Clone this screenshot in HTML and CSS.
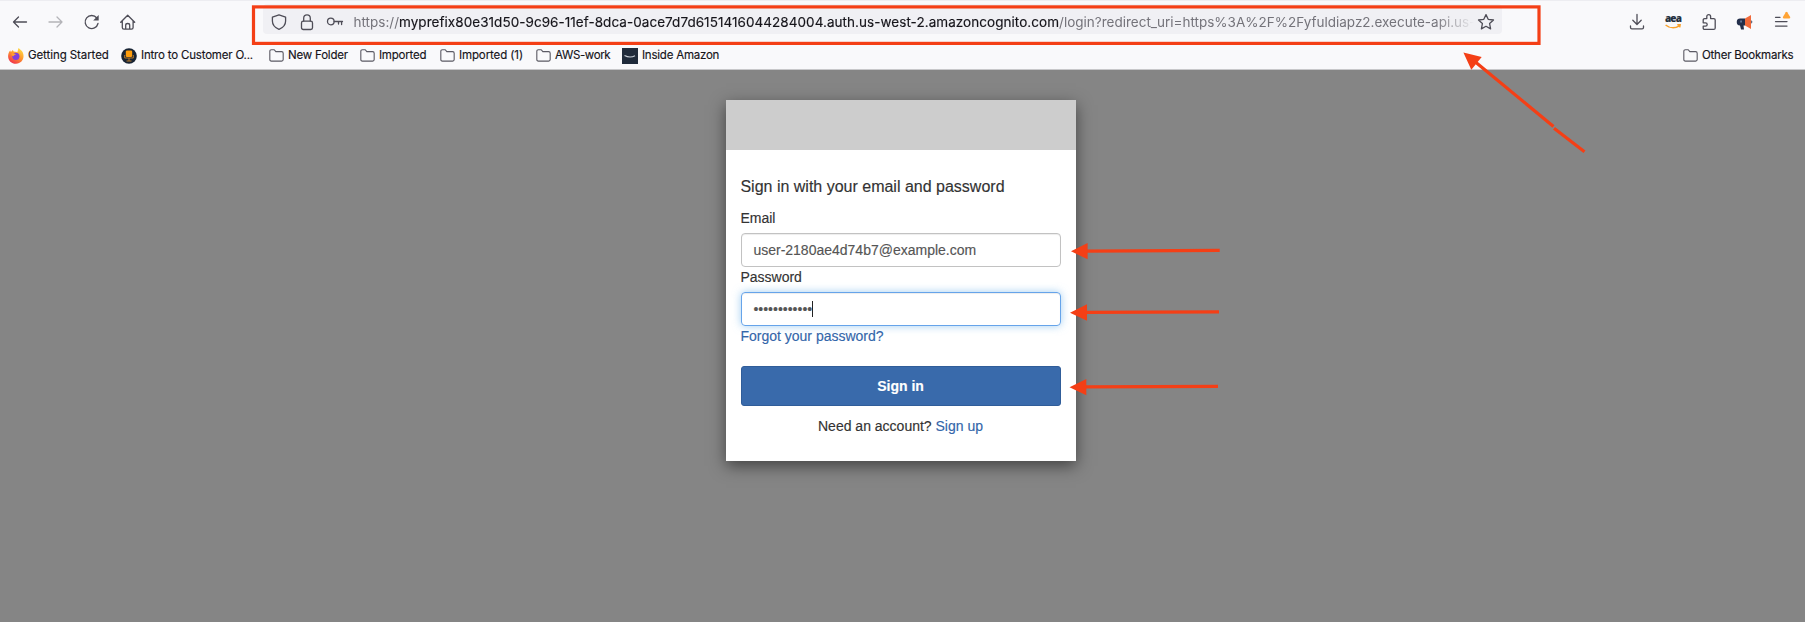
FILE: index.html
```
<!DOCTYPE html>
<html lang="en">
<head>
<meta charset="utf-8">
<title>Sign in</title>
<link rel="stylesheet" href="styles.css">
</head>
<body>
<header class="chrome">
  <div class="navbar">
    <div class="nav-buttons">
      <svg class="icon" viewBox="0 0 16 16"><path d="M14.500 8H1.500M6.500 3 1.500 8l5 5"/></svg>
      <svg class="icon disabled" viewBox="0 0 16 16"><path d="M1 8h13M9 3l5 5-5 5"/></svg>
      <svg class="icon" viewBox="0 0 16 16"><path d="M12.800 4A6.500 6.500 0 1 0 14 9.500"/><path class="solid" d="M14.700 1v5.500H9.200z"/></svg>
      <svg class="icon" viewBox="0 0 16 16"><path d="M.7 8.300 7.700 1.300l7 7M2.300 7v6.600q0 1.600 1.600 1.600h7.600q1.600 0 1.600-1.600V7M5.700 15v-3.800q0-1.700 2-1.700t2 1.700V15"/></svg>
    </div>
    <div class="urlbar">
      <div class="url-icons">
        <svg class="icon" viewBox="0 0 16 16"><path d="M8 .8 14.600 3.200V7c0 4-2.600 6.700-6.600 8.400C4 13.700 1.400 11 1.400 7V3.200z"/></svg>
        <svg class="icon" viewBox="0 0 16 16"><rect x="2.500" y="7.200" width="11" height="8.300" rx="1.800"/><path d="M4.700 7V4.200a3.300 3.300 0 0 1 6.600 0V7"/></svg>
        <svg class="icon" viewBox="0 0 16 16"><circle cx="3.800" cy="7.500" r="3.300"/><path d="M7.200 7.500h8.300M14.600 7.500v3M11.500 7.500v2.500"/></svg>
      </div>
      <div class="url"><span class="scheme">https://</span><span class="host">myprefix80e31d50-9c96-11ef-8dca-0ace7d7d6151416044284004.auth.us-west-2.amazoncognito.com</span><span class="path">/login?redirect_uri=https%3A%2F%2Fyfuldiapz2.execute-api.us-</span></div>
      <svg class="icon star" viewBox="0 0 16 16"><path d="m8 .6 2.200 4.700 5.300.7-3.900 3.600 1 5.300L8 12.300l-4.600 2.600 1-5.300L.5 6l5.300-.7z"/></svg>
    </div>
    <div class="tools">
      <svg class="icon" viewBox="0 0 16 16"><path d="M8 .5v9.800M3.800 6.300 8 10.500l4.200-4.200M1.500 12v1.500q0 1.400 1.400 1.400h10.200q1.400 0 1.400-1.400V12"/></svg>
      <div class="aea"><span class="aea-text">aea</span><svg class="smile" viewBox="0 0 16 5"><path d="M.6 1c4 3.300 9.500 3.400 13.800.8M12.300.8l2.800-.1-.4 2.600"/></svg></div>
      <svg class="icon" viewBox="0 0 16 16"><path d="M2.200 8.800V6.100q0-1.500 1.500-1.500h2.100V2.500a1.900 1.900 0 0 1 3.800 0v2.100h3.100q1.500 0 1.500 1.500v7.800q0 1.500-1.500 1.500H3.700q-1.500 0-1.500-1.500v-1.700h2.300a1.700 1.700 0 0 0 0-3.400z"/></svg>
      <svg class="icon horn" viewBox="0 0 16 16"><path class="navy" d="M8 4.500H3.500a3.500 3.500 0 0 0-.5 7l1 4h3l-.5-4H8z"/><path class="orange" d="M8 4.500 14 1v14l-6-3.500z"/><path class="navy" d="M14.300 6.300q2 1.700 0 3.400z"/><path class="eye" d="M3.300 6.500h1.500v2H3.300z"/></svg>
      <svg class="icon menu" viewBox="0 0 16 16"><path d="M2.500 3.300H7M2.500 7.600h11.500M2.500 12.100h11.500"/><path class="alert" d="M12.800-1.700q.7-.9 1.400 0l3 4.800q.4 1.400-.9 1.400h-5.500q-1.300 0-.9-1.400z"/></svg>
    </div>
  </div>
  <nav class="bookmarks">
    <div class="bookmark b1"><svg class="fav" viewBox="0 0 16 16"><defs><linearGradient id="ff" x1=".8" y1="0" x2=".2" y2="1"><stop offset="0" stop-color="#ffe04a"/><stop offset=".45" stop-color="#ff9a2c"/><stop offset="1" stop-color="#f0264f"/></linearGradient></defs><path fill="url(#ff)" d="M10.500 0c1 1 3.500 2.500 4.300 4.500 2.300 5.500-1 11.300-6.800 11.300-5 0-8.500-3.800-7.800-8.800C.6 4.600 1.600 3 2.300 2.500l.6 1.600L4.800 2l.9 1.600 3.700.5z"/><circle cx="7.900" cy="8.300" r="3.600" fill="#8040dc"/><path fill="#ffa12e" d="M3.500 5.400c2-.6 3.700.2 4.600 1.300-1.700 0-2.500.7-2.500 1.600-1.400-.2-2.400-1.200-2.100-2.900z"/></svg><span>Getting Started</span></div>
    <div class="bookmark b2"><svg class="fav" viewBox="0 0 16 16"><circle cx="8" cy="8" r="7.800" fill="#182434"/><rect x="4.800" y="2.500" width="6.400" height="6.500" rx="1.200" fill="#ff9d0a"/><path d="M3.700 7v3h8.600V7M8 10v3M5.500 13h5" fill="none" stroke="#b97a28"/></svg><span>Intro to Customer O...</span></div>
    <div class="bookmark b3"><svg class="folder" viewBox="0 0 16 14"><path d="M.8 11.300V2.500Q.8.800 2.500.800h3l1.800 2h6.200q1.700 0 1.700 1.700v6.800q0 1.700-1.700 1.700h-11Q.8 13 .8 11.300z"/></svg><span>New Folder</span></div>
    <div class="bookmark b4"><svg class="folder" viewBox="0 0 16 14"><path d="M.8 11.300V2.500Q.8.800 2.500.800h3l1.800 2h6.200q1.700 0 1.700 1.700v6.800q0 1.700-1.700 1.700h-11Q.8 13 .8 11.300z"/></svg><span>Imported</span></div>
    <div class="bookmark b5"><svg class="folder" viewBox="0 0 16 14"><path d="M.8 11.300V2.500Q.8.800 2.500.800h3l1.800 2h6.200q1.700 0 1.700 1.700v6.800q0 1.700-1.700 1.700h-11Q.8 13 .8 11.300z"/></svg><span>Imported (1)</span></div>
    <div class="bookmark b6"><svg class="folder" viewBox="0 0 16 14"><path d="M.8 11.300V2.500Q.8.800 2.500.800h3l1.800 2h6.200q1.700 0 1.700 1.700v6.800q0 1.700-1.700 1.700h-11Q.8 13 .8 11.300z"/></svg><span>AWS-work</span></div>
    <div class="bookmark b7"><svg class="fav" viewBox="0 0 16 16"><path fill="#202b3b" d="M0 0h16v16H0z"/><path d="M2.500 7.500q5.500 3 10.500.2" fill="none" stroke="#c9d0d8" stroke-width="1.100"/></svg><span>Inside Amazon</span></div>
    <div class="bookmark other"><svg class="folder" viewBox="0 0 16 14"><path d="M.8 11.300V2.500Q.8.800 2.500.800h3l1.800 2h6.200q1.700 0 1.700 1.700v6.800q0 1.700-1.700 1.700h-11Q.8 13 .8 11.300z"/></svg><span>Other Bookmarks</span></div>
  </nav>
</header>
<main class="page">
  <section class="card">
    <div class="banner"></div>
    <div class="form">
      <h1 class="title">Sign in with your email and password</h1>
      <div class="label">Email</div>
      <div class="field"><span>user-2180ae4d74b7@example.com</span></div>
      <div class="label pw">Password</div>
      <div class="field focus"><span class="dots">••••••••••••</span><i class="caret"></i></div>
      <a class="link forgot">Forgot your password?</a>
      <div class="submit">Sign in</div>
      <p class="signup">Need an account? <a class="link">Sign up</a></p>
    </div>
  </section>
</main>
<svg class="annotations" viewBox="0 0 1805 622">
  <rect x="253.500" y="6.900" width="1285.500" height="36.500"/>
  <path d="M1087 251.200 1219.700 250.300M1086 312.300 1219 311.800M1085 386.900 1218 386.300M1476 62.500 1553.500 126.500M1554 128.300 1584.500 151.800"/>
  <path class="head" d="M1071 251.300 1087.600 243v16.300zM1070 312.700 1087 304.300v16.500zM1069.500 387.300 1086.300 379v16.300zM1463.400 52.500 1481.700 57 1471.300 69.800z"/>
</svg>
</body>
</html>
```
FILE: styles.css
```
* { box-sizing: border-box; }
body { margin: 0; height: 622px; overflow: hidden; display: flex; flex-direction: column; background: #858585; font-family: "Liberation Sans", Arial, sans-serif; }
.chrome { height: 70px; flex: none; background: #f9f9fb; border-top: 1px solid #ededf1; border-bottom: 1px solid #c8c8ca; font-family: Inter, sans-serif; color: #15141a; }
.navbar { height: 41px; display: flex; align-items: center; }
.nav-buttons { width: 263px; padding-left: 12px; display: flex; gap: 20px; }
.icon { width: 16px; height: 16px; flex: none; overflow: visible; fill: none; stroke: #4e4d57; stroke-width: 1.3; stroke-linecap: round; stroke-linejoin: round; }
.disabled { stroke: #b4b4b8; }
.icon .solid { fill: #4e4d57; stroke: none; }
.urlbar { width: 1239px; height: 30px; margin-top: -5px; padding: 5px 8px 0; display: flex; align-items: center; background: #f0f0f4; border-radius: 4px; }
.url-icons { display: flex; flex: none; gap: 12px; width: 82px; }
.url { flex: none; width: 1121px; padding-left: 0.5px; white-space: nowrap; font-size: 13.500px; line-height: 20px; color: #74737a; -webkit-mask-image: linear-gradient(to right, #000 1082px, transparent 1121px); mask-image: linear-gradient(to right, #000 1082px, transparent 1121px); }
.host { color: #15141a; letter-spacing: 0.05px; -webkit-text-stroke: 0.15px #15141a; }
.star { margin-left: 4px; }
.tools { margin-left: auto; padding-right: 16px; display: flex; gap: 20px; align-items: center; }
.aea { width: 16px; height: 16px; display: flex; flex-direction: column; align-items: center; }
.aea-text { font: 800 10px/9px "Open Sans", sans-serif; color: #232f3e; letter-spacing: -0.8px; }
.smile { width: 16px; height: 5px; flex: none; margin-top: 1px; fill: none; stroke: #f9a12b; stroke-width: 1.5; }
.horn { stroke: none; }
.navy { fill: #232f4b; }
.orange { fill: #f0693a; }
.eye { fill: #7289ad; }
.alert { fill: #ffa436; stroke: none; }
.bookmarks { height: 27px; padding-left: 8px; display: flex; align-items: center; font-size: 11.500px; line-height: 16px; white-space: nowrap; -webkit-text-stroke: 0.15px #15141a; }
.bookmark { display: flex; gap: 4px; align-items: center; flex: none; letter-spacing: -0.22px; }
.bookmark span { margin-top: -1px; }
.fav { width: 16px; height: 16px; flex: none; }
.folder { width: 15px; height: 13px; flex: none; fill: none; stroke: #5b5a64; stroke-width: 1.2; }
.b1 { width: 113px; letter-spacing: -0.08px; }
.b2 { width: 148px; letter-spacing: -0.19px; }
.b3 { width: 91px; letter-spacing: -0.2px; }
.b4 { width: 80px; }
.b5 { width: 96px; letter-spacing: -0.11px; }
.b6 { width: 86px; letter-spacing: -0.36px; }
.other { margin-left: auto; width: 122px; }
.page { flex: 1; padding: 30px 0 0 726px; }
.card { width: 350px; height: 361px; background: #fff; box-shadow: 0 5px 15px rgba(0, 0, 0, .5); }
.banner { height: 50px; background: #cdcdcd; }
.form { padding: 25px 15px 0; display: flex; flex-direction: column; font-size: 14px; line-height: 20px; color: #333; -webkit-text-stroke: 0.15px; }
.title { margin: 0 0 0 -0.6px; padding-top: 1px; height: 33px; font-size: 16px; line-height: 22px; font-weight: 400; }
.label { height: 25px; margin-left: -0.6px; }
.field { height: 34px; padding: 0 11.4px; display: flex; align-items: center; border: 1px solid #c2c2c2; border-radius: 4px; color: #555; box-shadow: inset 0 1px 1px rgba(0, 0, 0, .075); }
.focus { border-color: #66a4ea; box-shadow: inset 0 1px 1px rgba(0, 0, 0, .075), 0 0 8px rgba(102, 175, 233, .6); }
.caret { width: 1px; height: 16px; background: #222; }
.link { color: #3366aa; }
.forgot { height: 40px; margin-left: -0.6px; }
.submit { height: 40px; padding-right: 1px; display: flex; align-items: center; justify-content: center; color: #fff; font-weight: 700; background: #396aab; border: 1px solid #305d99; border-radius: 3px; }
.signup { margin: 10px 1px 0 0; text-align: center; }
.annotations { position: absolute; left: 0; top: 0; width: 1805px; height: 622px; fill: none; stroke: #f43f16; stroke-width: 3.2; }
.annotations .head { fill: #f43f16; stroke: none; }
```
